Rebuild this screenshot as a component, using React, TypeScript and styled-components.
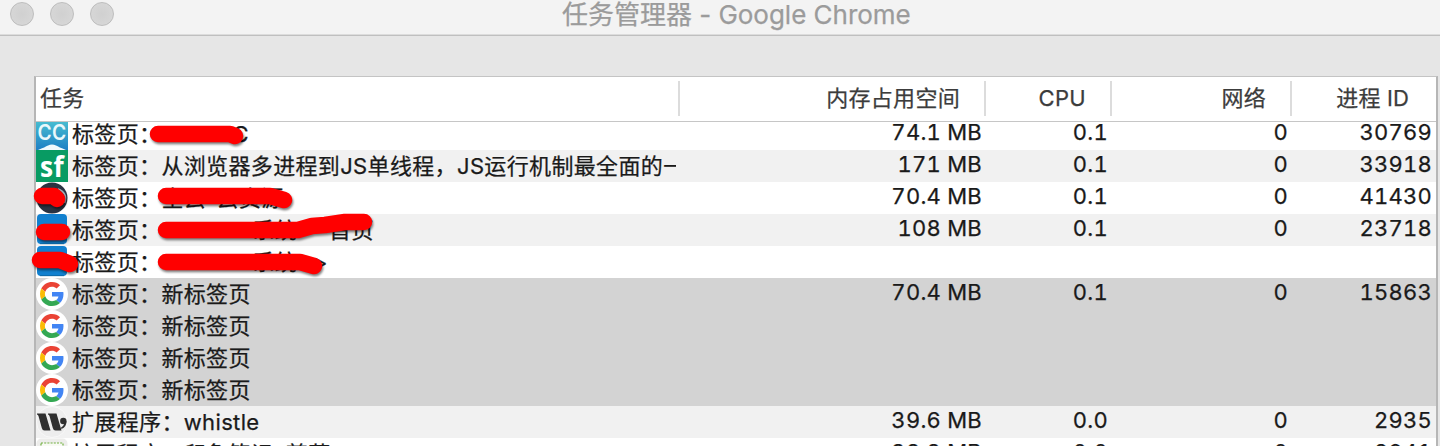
import React from "react";
import styled, { createGlobalStyle } from "styled-components";

const Global = createGlobalStyle`
  * { box-sizing: border-box; }
  body { margin: 0; background: #e6e6e6; overflow: hidden; }
`;

const Window = styled.div`
  position: relative;
  width: 1440px;
  height: 446px;
  display: flex;
  flex-direction: column;
  overflow: hidden;
  background: #e6e6e6;
  font-family: Inter, "Noto Sans CJK SC", sans-serif;
  font-size: 22px;
  color: #1a1a1a;
  -webkit-text-stroke: 0.25px currentColor;
`;

const TitleBar = styled.header`
  flex: none;
  display: grid;
  grid-template-columns: 552px 1fr;
  height: 36px;
  background: #f3f3f3;
  border-bottom: 1px solid #bfbfbf;
  box-shadow: inset 0 -1px 0 #dcdcdc;
`;

const Lights = styled.div`
  display: flex;
  gap: 16px;
  padding: 2px 0 0 10px;
`;

const Light = styled.i`
  width: 24px;
  height: 24px;
  border-radius: 50%;
  border: 1px solid #bdbdbd;
  background: radial-gradient(#d0d0d0, #d9d9d9);
`;

const Title = styled.h1`
  margin: 0;
  padding-left: 10px;
  font-size: 26px;
  line-height: 30px;
  font-weight: 400;
  letter-spacing: -0.02px;
  color: #9b9b9b;
  white-space: pre;
`;

const Table = styled.main`
  flex: none;
  display: flex;
  flex-direction: column;
  width: 1404px;
  height: 380px;
  margin: 40px 0 0 34px;
  border: 2px solid #b6b6b6;
  border-top: 1px solid #c4c4c4;
  border-bottom: 0;
  background: #fff;
`;

const columns = "644px 306px 126px 180px 144px";

const Head = styled.div`
  flex: none;
  display: grid;
  grid-template-columns: ${columns};
  height: 45px;
  padding-top: 4px;
  border-bottom: 1px solid #c6c6c6;
  color: #3c3c3c;
`;

const HeadCell = styled.div<{ $left?: boolean; $last?: boolean }>`
  height: 35px;
  line-height: 35px;
  text-align: ${(p) => (p.$left ? "left" : "right")};
  padding: ${(p) => (p.$left ? "0 0 0 4px" : p.$last ? "0 27px 0 0" : "0 24px 0 0")};
  border-right: ${(p) => (p.$last ? "0" : "2px solid #dcdcdc")};
  letter-spacing: ${(p) => (p.$last ? "0.15px" : "0.3px")};
  white-space: nowrap;
`;

const Body = styled.div`
  flex: 1;
  min-height: 0;
  display: flex;
  flex-direction: column;
  justify-content: flex-start;
  overflow: hidden;
`;

const Row = styled.div<{ $bg: string; $first?: boolean }>`
  flex: none;
  display: grid;
  grid-template-columns: ${columns};
  height: 32px;
  margin-top: ${(p) => (p.$first ? "-4px" : "0")};
  background: ${(p) => p.$bg};
`;

const Name = styled.div`
  display: flex;
  gap: 4px;
  height: 32px;
  overflow: hidden;
  line-height: 32px;
  letter-spacing: 0.35px;
  white-space: pre;
`;

const Label = styled.span<{ $dash?: boolean }>`
  flex: none;
  ${(p) => p.$dash && "width: 604px; overflow: hidden;"}
`;

const Fragment = styled.span<{ $gap: number }>`
  margin-left: ${(p) => p.$gap}px;
`;

const Num = styled.div`
  height: 32px;
  line-height: 28px;
  padding-right: 4px;
  text-align: right;
  letter-spacing: 0.25px;
  font-variant-numeric: tabular-nums;
  font-kerning: none;
  white-space: pre;
`;

const Icon = styled.svg`
  flex: none;
  display: block;
  width: 32px;
  height: 32px;
  -webkit-text-stroke: 0;
`;

const Marks = styled.svg`
  position: absolute;
  inset: 0;
  width: 1440px;
  height: 446px;
  pointer-events: none;
  filter: drop-shadow(1px 2px 1px rgba(0, 0, 0, 0.5));
`;

const CcIcon = () => (
  <Icon viewBox="0 0 32 32">
    <defs>
      <linearGradient id="cc" x1="0" y1="0" x2="0" y2="1">
        <stop offset="0" stopColor="#4cc4d2" />
        <stop offset="1" stopColor="#1e7fc4" />
      </linearGradient>
    </defs>
    <rect width="32" height="32" fill="url(#cc)" />
    <text x="16" y="21.500" textAnchor="middle" fontFamily="Inter" fontWeight="600" fontSize="21" textLength="29" lengthAdjust="spacingAndGlyphs" fill="#e9f8fb">CC</text>
    <path d="M2 32C7 30 10 28.500 12 27.500Q16 25.500 20 27.500C22 28.500 25 30 30 32z" fill="#f2fafd" />
  </Icon>
);

const SfIcon = () => (
  <Icon viewBox="0 0 32 32">
    <rect width="32" height="32" fill="#089b63" />
    <text x="16" y="27" textAnchor="middle" fontFamily="Open Sans" fontWeight="700" fontSize="29" textLength="24" lengthAdjust="spacingAndGlyphs" fill="#fff">sf</text>
  </Icon>
);

const DarkIcon = () => (
  <Icon viewBox="0 0 32 32">
    <circle cx="16" cy="16" r="15.500" fill="#2a3342" />
    <path d="M22 7c6 2 9 7 6.500 14" fill="none" stroke="#aab2bc" strokeWidth="1.800" />
  </Icon>
);

const BlueIcon = () => (
  <Icon viewBox="0 0 32 32">
    <rect x="1" y="0" width="30" height="30" rx="4" fill="#1180cf" />
    <path d="M4 29.700h24" stroke="#0c6299" strokeWidth="0.800" />
  </Icon>
);

const GoogleIcon = () => (
  <Icon viewBox="0 0 32 32">
    <circle cx="16" cy="16" r="16" fill="#fff" />
    <g transform="translate(4 4) scale(.5)">
      <path fill="#ea4335" d="M24 9.5c3.54 0 6.71 1.22 9.21 3.6l6.85-6.85C35.9 2.38 30.47 0 24 0 14.62 0 6.51 5.38 2.56 13.22l7.98 6.19C12.43 13.72 17.74 9.5 24 9.5z" />
      <path fill="#4285f4" d="M46.98 24.55c0-1.57-.15-3.09-.38-4.55H24v9.02h12.94c-.58 2.96-2.26 5.48-4.78 7.18l7.73 6c4.51-4.18 7.09-10.36 7.09-17.65z" />
      <path fill="#fbbc05" d="M10.53 28.59A14.5 14.5 0 0 1 9.77 24c0-1.6.27-3.14.76-4.59l-7.98-6.19A23.9 23.9 0 0 0 0 24c0 3.88.92 7.54 2.56 10.78z" />
      <path fill="#34a853" d="M24 48c6.48 0 11.93-2.13 15.89-5.81l-7.73-6c-2.15 1.45-4.92 2.3-8.16 2.3-6.26 0-11.57-4.22-13.47-9.91l-7.98 6.19C6.51 42.62 14.62 48 24 48z" />
    </g>
  </Icon>
);

const WhistleIcon = () => (
  <Icon viewBox="0 0 32 32">
    <circle cx="16" cy="16" r="15.500" fill="#ededed" stroke="#f8f8f8" />
    <path d="M1 7.500H9.500L14.500 24.500H8.500Q6.500 24.500 5.800 22L2.500 10Q2 8.500 1 8.500z" fill="#2f2f2f" />
    <path d="M12 7.500H20.500L25.500 24.500H19.500Q17.500 24.500 16.800 22L13.500 10Q13 8.500 12 8.500z" fill="#2f2f2f" />
    <circle cx="27.300" cy="15" r="3.200" fill="#2f2f2f" />
    <path d="M30.500 15c0 4-1.500 6.500-5 8l-.6-1.200c2.500-1.500 3.400-3.400 3.400-5z" fill="#2f2f2f" />
  </Icon>
);

const NoteIcon = () => (
  <Icon viewBox="0 0 32 32">
    <rect x="0.500" y="0.500" width="31" height="31" rx="5" fill="#ededeb" />
    <path d="M5 5h22v24H5z" fill="#f8faf4" stroke="#72b043" strokeWidth="1.200" strokeDasharray="2 1.200" />
  </Icon>
);

type Task = {
  icon: React.ReactNode;
  label: React.ReactNode;
  values?: string[];
  bg: string;
};

const white = "#ffffff";
const stripe = "#f1f1f1";
const selected = "#d3d3d3";

const tasks: Task[] = [
  { icon: <CcIcon />, label: <>标签页：<Fragment $gap={71}>C</Fragment></>, values: ["74.1 MB", "0.1", "0", "30769"], bg: white },
  { icon: <SfIcon />, label: "标签页：从浏览器多进程到JS单线程，JS运行机制最全面的一次梳理", values: ["171 MB", "0.1", "0", "33918"], bg: stripe },
  { icon: <DarkIcon />, label: "标签页：全云-云资源", values: ["70.4 MB", "0.1", "0", "41430"], bg: white },
  { icon: <BlueIcon />, label: <>标签页：<Fragment $gap={91}>系统</Fragment><Fragment $gap={32}>首页</Fragment></>, values: ["108 MB", "0.1", "0", "23718"], bg: stripe },
  { icon: <BlueIcon />, label: <>标签页：<Fragment $gap={91}>系统</Fragment><Fragment $gap={16}>&gt;</Fragment></>, bg: white },
  { icon: <GoogleIcon />, label: "标签页：新标签页", values: ["70.4 MB", "0.1", "0", "15863"], bg: selected },
  { icon: <GoogleIcon />, label: "标签页：新标签页", bg: selected },
  { icon: <GoogleIcon />, label: "标签页：新标签页", bg: selected },
  { icon: <GoogleIcon />, label: "标签页：新标签页", bg: selected },
  { icon: <WhistleIcon />, label: "扩展程序：whistle", values: ["39.6 MB", "0.0", "0", "2935"], bg: stripe },
  { icon: <NoteIcon />, label: <>扩展程序：印象笔记<Fragment $gap={3}>·</Fragment><Fragment $gap={3}>剪藏</Fragment></>, values: ["38.8 MB", "0.0", "0", "2941"], bg: white },
];

const strokes = [
  "M158 134H230L235 136",
  "M166 196H270L284 200",
  "M166 230H298L312 226L325 225L345 222H364",
  "M166 262H300L314 266",
  "M42 196H54L57 199",
  "M44 232H62",
  "M40 260H60L70 264",
];

export default function App() {
  return (
    <Window>
      <Global />
      <TitleBar>
        <Lights>
          <Light />
          <Light />
          <Light />
        </Lights>
        <Title>任务管理器 - Google Chrome</Title>
      </TitleBar>
      <Table>
        <Head>
          <HeadCell $left>任务</HeadCell>
          <HeadCell>内存占用空间</HeadCell>
          <HeadCell>CPU</HeadCell>
          <HeadCell>网络</HeadCell>
          <HeadCell $last>进程 ID</HeadCell>
        </Head>
        <Body>
          {tasks.map((t, i) => (
            <Row key={i} $bg={t.bg} $first={i === 0}>
              <Name>
                {t.icon}
                <Label $dash={i === 1}>{t.label}</Label>
              </Name>
              {t.values?.map((v, j) => <Num key={j}>{v}</Num>)}
            </Row>
          ))}
        </Body>
      </Table>
      <Marks viewBox="0 0 1440 446">
        {strokes.map((d) => (
          <path key={d} d={d} fill="none" stroke="#ff0000" strokeWidth="16.500" strokeLinecap="round" strokeLinejoin="round" />
        ))}
      </Marks>
    </Window>
  );
}
